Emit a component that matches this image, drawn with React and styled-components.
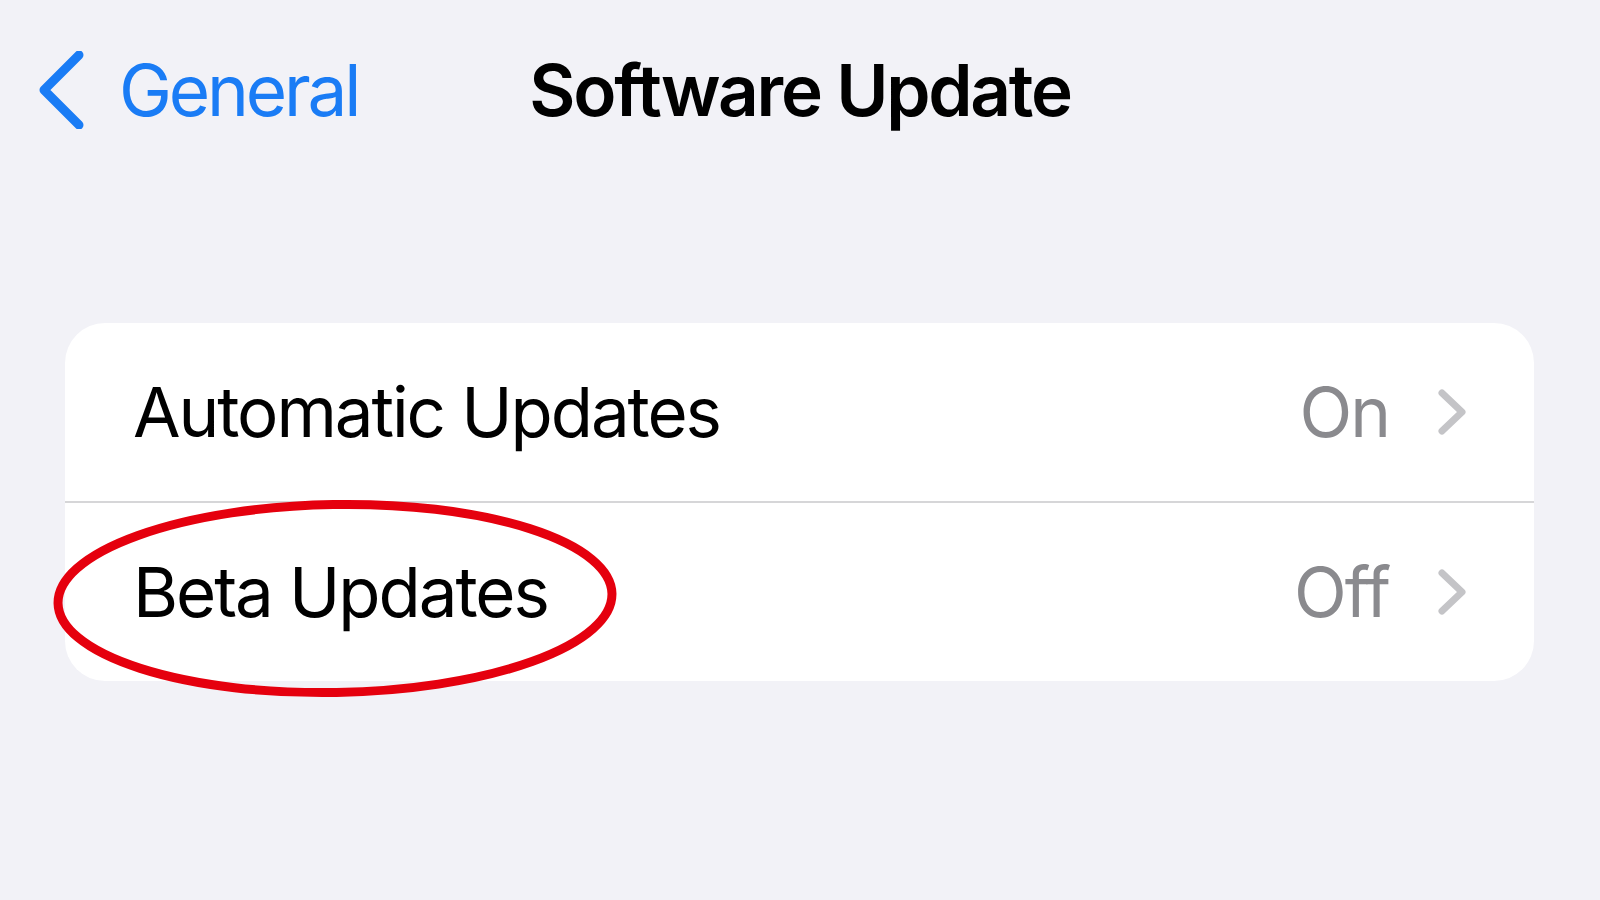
import React from 'react';
import styled, { createGlobalStyle } from 'styled-components';

const GlobalStyle = createGlobalStyle`
  html, body {
    margin: 0;
    padding: 0;
    background: #f2f2f7;
    font-family: Inter, "Noto Sans", sans-serif;
    -webkit-font-smoothing: antialiased;
  }
`;

const Page = styled.div`
  width: 1600px;
  height: 900px;
  background: #f2f2f7;
  overflow: hidden;
`;

const NavBar = styled.div`
  display: grid;
  grid-template-columns: 1fr auto 1fr;
  align-items: center;
  height: 180px;
  padding: 0 39px;
  box-sizing: border-box;
`;

const BackButton = styled.div`
  display: flex;
  align-items: center;
  gap: 35px;
  color: #1a7cf5;
  font-size: 71px;
  letter-spacing: -0.045em;
`;

const Title = styled.h1`
  margin: 0;
  font-size: 71px;
  font-weight: 600;
  letter-spacing: -0.032em;
  color: #000;
`;

const Card = styled.div`
  position: relative;
  margin: 143px 66px 0 65px;
  background: #fff;
  border-radius: 40px;
`;

const Row = styled.div`
  display: flex;
  align-items: center;
  height: 178px;
  padding: 0 68px;
  border-top: ${(p) => (p.$divider ? '2px solid #d6d6d8' : 'none')};
`;

const Label = styled.span`
  flex: 1;
  font-size: 69px;
  letter-spacing: -0.03em;
  color: #000;
`;

const Value = styled.span`
  font-size: 69px;
  letter-spacing: -0.03em;
  color: #8a8a8e;
  margin-right: 49px;
`;

const Annotation = styled.svg`
  position: absolute;
  left: -12px;
  top: 176px;
  width: 564px;
  height: 199px;
  overflow: visible;
  pointer-events: none;
`;

const BackChevron = () => (
  <svg width="45" height="78" viewBox="0 0 45 78">
    <path d="M40 4 L5 39 L40 74" fill="none" stroke="#1a7cf5" strokeWidth="9" strokeLinecap="round" strokeLinejoin="round" />
  </svg>
);

const Chevron = () => (
  <svg width="28" height="46" viewBox="0 0 28 46">
    <path d="M4 4 L24 23 L4 42" fill="none" stroke="#c4c4c7" strokeWidth="7" strokeLinecap="round" strokeLinejoin="round" />
  </svg>
);

const App = () => (
  <Page>
    <GlobalStyle />
    <NavBar>
      <BackButton>
        <BackChevron />
        General
      </BackButton>
      <Title>Software Update</Title>
      <div />
    </NavBar>
    <Card>
      <Row>
        <Label>Automatic Updates</Label>
        <Value>On</Value>
        <Chevron />
      </Row>
      <Row $divider>
        <Label>Beta Updates</Label>
        <Value>Off</Value>
        <Chevron />
      </Row>
      <Annotation viewBox="0 0 564 199">
        <ellipse cx="282" cy="99.5" rx="277" ry="94" fill="none" stroke="#e5000e" strokeWidth="9" transform="rotate(-1 282 99.5)" />
      </Annotation>
    </Card>
  </Page>
);

export default App;
